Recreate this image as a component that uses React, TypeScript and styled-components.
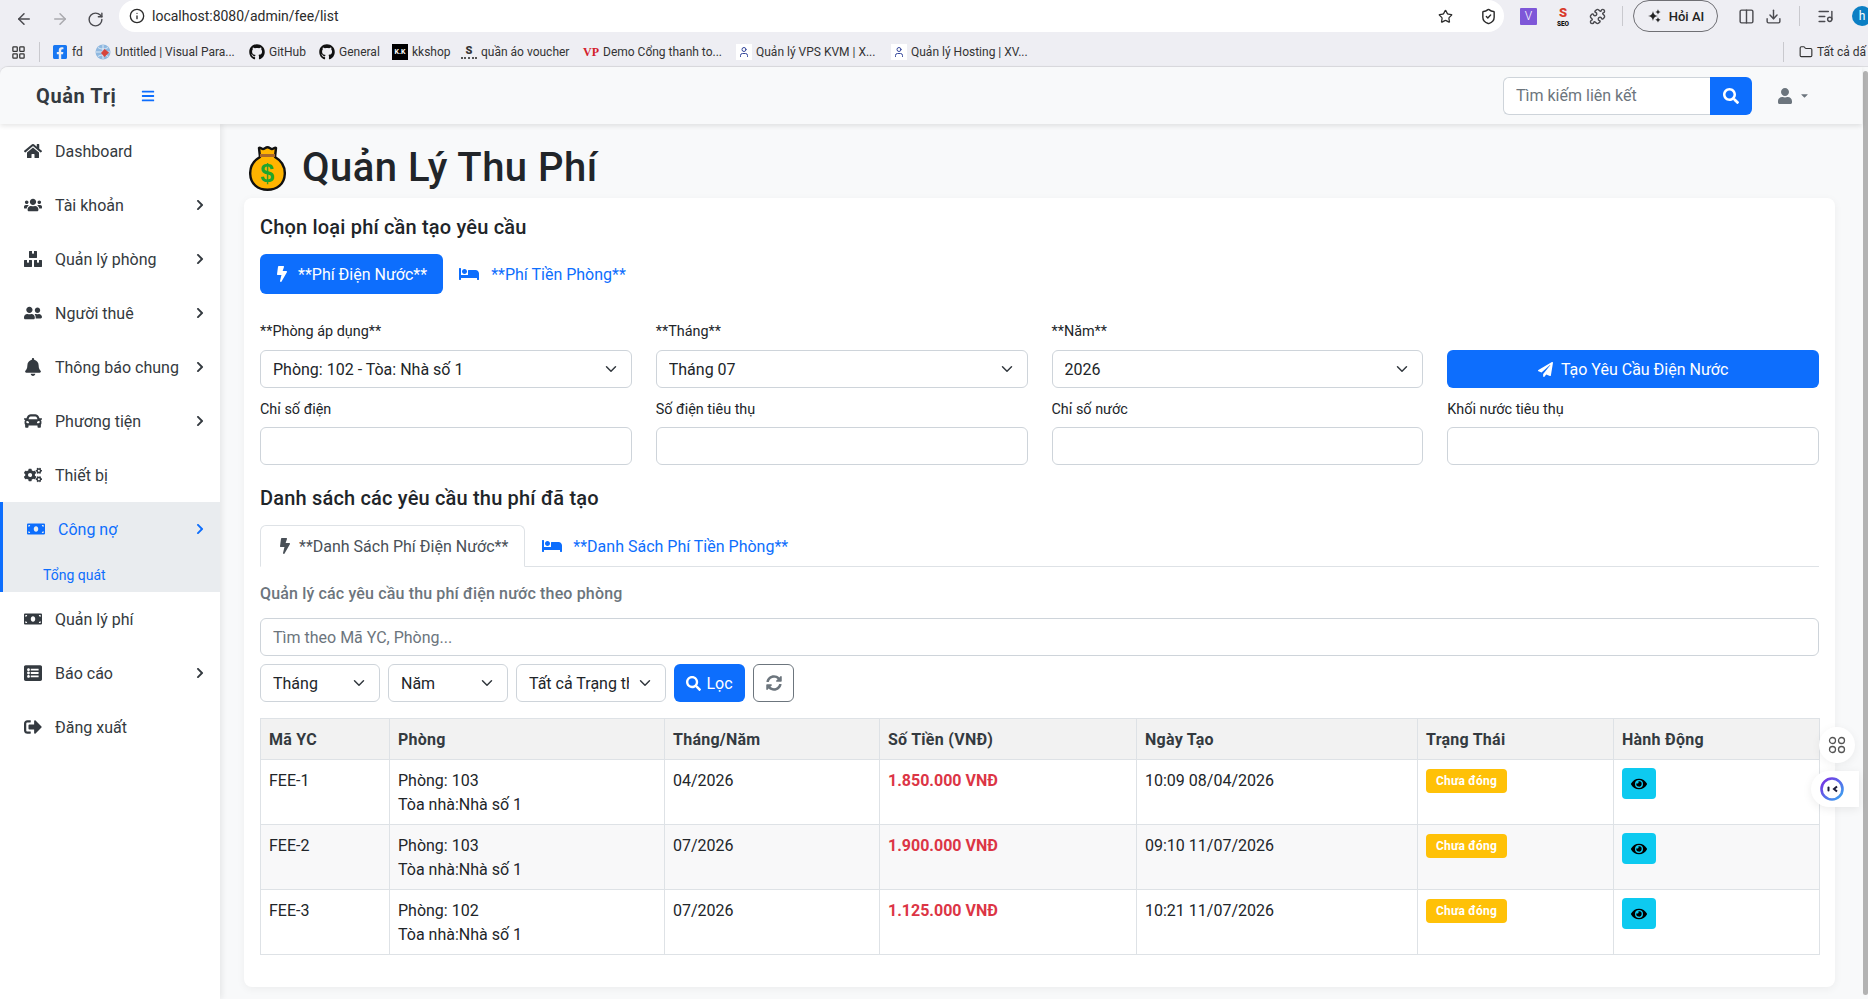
import React from 'react';
import styled, {createGlobalStyle} from 'styled-components';
import {
    FaBars, FaBed, FaBell, FaBolt, FaBoxes, FaCar, FaCaretDown, FaChevronRight, FaCogs, FaEye, FaFacebookSquare,
    FaGithub, FaHome, FaListAlt, FaMoneyBill, FaPaperPlane, FaSearch, FaSignOutAlt, FaSyncAlt, FaUser,
    FaUserFriends, FaUsers,
} from 'react-icons/fa';
import {
    ArrowLeft, ArrowRight, Columns2, Download, Folder, Info, LayoutGrid, ListMusic, Puzzle, RotateCw,
    ShieldCheck, Star, User,
} from 'lucide-react';

const font = `Roboto, "Noto Sans", sans-serif`;
const chevron = `url("data:image/svg+xml,%3csvg xmlns='http://www.w3.org/2000/svg' viewBox='0 0 16 16'%3e%3cpath fill='none' stroke='%23343a40' stroke-linecap='round' stroke-linejoin='round' stroke-width='2' d='m2 5 6 6 6-6'/%3e%3c/svg%3e")`;

const GlobalStyle = createGlobalStyle`
  html, body {
    margin: 0;
    height: 100%;
    overflow: hidden;
    background: #f8f9fa;
    font-family: ${font};
    font-size: 16px;
    color: #212529;
  }
  * {
    box-sizing: border-box;
  }
`;

const Window = styled.div`
  width: 1868px;
  height: 999px;
  display: flex;
  flex-direction: column;
  overflow: hidden;
  background: #eeeef3;
`;

const Toolbar = styled.div`
  height: 38px;
  display: flex;
  align-items: center;
  color: #4a4a4f;
`;

const NavIcons = styled.div`
  width: 119px;
  flex: none;
  display: flex;
  align-items: center;
  gap: 18px;
  padding-left: 15px;
  svg:nth-child(2) {
    color: #a9a9ae;
  }
`;

const AddressBar = styled.div`
  width: 1385px;
  height: 32px;
  margin-top: -6px;
  flex: none;
  border-radius: 16px;
  background: #fff;
  display: flex;
  align-items: center;
  padding: 0 7px 0 10px;
  font-size: 14px;
  color: #2b2b2b;
  gap: 7px;
`;

const Url = styled.span`
  flex: 1;
`;

const ExtIcons = styled.div`
  flex: 1;
  display: flex;
  align-items: center;
  margin-top: -6px;
  padding-left: 16px;
  overflow: hidden;
  height: 32px;
  svg {
    flex: none;
  }
`;

const VIcon = styled.span`
  width: 17px;
  height: 17px;
  flex: none;
  border-radius: 1px;
  background: #7e57d8;
  color: #fff;
  font-size: 12px;
  font-weight: 300;
  display: flex;
  align-items: center;
  justify-content: center;
  margin-right: 18px;
`;

const SeoIcon = styled.span`
  width: 16px;
  flex: none;
  display: flex;
  flex-direction: column;
  align-items: center;
  margin-right: 18px;
`;

const SeoLetter = styled.span`
  color: #d93a2b;
  font-size: 13px;
  line-height: 15px;
  font-weight: 900;
`;

const SeoWord = styled.span`
  color: #111;
  font-size: 6.5px;
  line-height: 8px;
  font-weight: 900;
`;

const Divider = styled.span`
  width: 1px;
  height: 20px;
  flex: none;
  background: #c9c9ce;
  margin: 0 ${p => p.$right ?? 0}px 0 ${p => p.$left ?? 0}px;
`;

const AskAi = styled.div`
  width: 85px;
  height: 32px;
  flex: none;
  border: 1px solid #6f6f74;
  border-radius: 16px;
  display: flex;
  align-items: center;
  justify-content: center;
  gap: 6px;
  font-size: 13px;
  font-weight: 500;
  color: #222;
  margin-right: 20px;
`;

const Avatar = styled.span`
  width: 20px;
  height: 20px;
  flex: none;
  border-radius: 50%;
  background: #0b7fc4;
  color: #fff;
  font-size: 12px;
  display: flex;
  align-items: center;
  justify-content: center;
  margin-left: 18px;
`;

const BookmarkBar = styled.div`
  height: 28px;
  display: flex;
  align-items: center;
  font-size: 12px;
  color: #333;
  white-space: nowrap;
  overflow: hidden;
  padding-left: 11px;
  svg {
    flex: none;
  }
`;

const AppsIcon = styled(LayoutGrid)`
  margin-right: 13px;
`;

const Bookmark = styled.span`
  display: flex;
  align-items: center;
  gap: 4px;
  width: ${p => p.$w}px;
  flex: none;
`;

const KkIcon = styled.span`
  width: 16px;
  height: 16px;
  background: #000;
  color: #fff;
  font-size: 7px;
  font-weight: 700;
  display: flex;
  align-items: center;
  justify-content: center;
`;

const ShopIcon = styled.span`
  width: 16px;
  flex: none;
  color: #333;
  font-size: 11px;
  line-height: 12px;
  font-weight: 900;
  text-align: center;
  border-bottom: 2px dotted #555;
`;

const VpIcon = styled.span`
  width: 16px;
  color: #d3202a;
  font-size: 12px;
  font-weight: 900;
  font-family: "Liberation Serif", serif;
`;

const UserFav = styled.span`
  width: 16px;
  height: 16px;
  background: #fff;
  color: #33459a;
  display: flex;
  align-items: center;
  justify-content: center;
`;

const Screen = styled.div`
  flex: 1;
  min-height: 0;
  display: flex;
  background: #f8f9fa;
  border-top: 1px solid #dcdce0;
  border-top-left-radius: 8px;
`;

const AppArea = styled.div`
  flex: 1;
  min-width: 0;
  display: flex;
  flex-direction: column;
  position: relative;
`;

const ScrollTrack = styled.div`
  width: 6px;
  flex: none;
  padding: 4px 0 4px 1px;
`;

const ScrollThumb = styled.div`
  height: 100%;
  background: #b3b3b3;
  border-radius: 3px;
`;

const Navbar = styled.header`
  height: 57px;
  flex: none;
  display: flex;
  align-items: center;
  padding: 0 52px 0 36px;
  background: #f8f9fa;
  border-top-left-radius: 8px;
  box-shadow: 0 2px 5px rgba(0, 0, 0, .1);
  position: relative;
  z-index: 2;
`;

const Brand = styled.div`
  font-size: 20px;
  font-weight: 700;
  letter-spacing: .6px;
  color: #343a40;
  width: 105px;
`;

const Burger = styled.span`
  color: #0d6efd;
  display: flex;
`;

const NavSearch = styled.div`
  margin-left: auto;
  width: 249px;
  height: 38px;
  display: flex;
`;

const NavInput = styled.input`
  flex: 1;
  min-width: 0;
  height: 38px;
  border: 1px solid #ced4da;
  border-right: 0;
  border-radius: 6px 0 0 6px;
  padding: 0 12px;
  font: 16px ${font};
  background: #fff;
  &::placeholder {
    color: #6c757d;
    opacity: 1;
  }
`;

const NavSearchButton = styled.button`
  width: 42px;
  border: 0;
  border-radius: 0 6px 6px 0;
  background: #0d6efd;
  color: #fff;
  display: flex;
  align-items: center;
  justify-content: center;
`;

const UserMenu = styled.div`
  display: flex;
  align-items: center;
  gap: 6px;
  margin-left: 25px;
  color: #6c757d;
`;

const Body = styled.div`
  flex: 1;
  min-height: 0;
  display: flex;
`;

const Sidebar = styled.nav`
  width: 220px;
  flex: none;
  background: #fff;
  box-shadow: 2px 0 6px rgba(0, 0, 0, .08);
  position: relative;
  z-index: 1;
`;

const NavGroup = styled.div`
  background: ${p => (p.$active ? '#e9ecef' : 'transparent')};
  border-left: ${p => (p.$active ? '3px solid #0d6efd' : '0')};
`;

const NavItem = styled.a`
  height: 54px;
  display: flex;
  align-items: center;
  padding: 0 14px 0 23px;
  color: ${p => (p.$active ? '#0d6efd' : '#343a40')};
  font-size: 16px;
`;

const NavIcon = styled.span`
  width: 20px;
  flex: none;
  display: flex;
  justify-content: center;
  margin-right: 12px;
  font-size: 18px;
`;

const NavArrow = styled.span`
  margin-left: auto;
  display: flex;
  font-size: 12px;
`;

const SubItem = styled.a`
  height: 36px;
  display: flex;
  align-items: center;
  padding: 2px 0 0 40px;
  color: #0d6efd;
  font-size: 14px;
`;

const Main = styled.main`
  flex: 1;
  min-width: 0;
  padding: 20px 27px 0 24px;
`;

const Title = styled.h1`
  margin: 0 0 6px;
  height: 48px;
  display: flex;
  align-items: center;
  gap: 16px;
  padding-left: 5px;
  font-size: 40px;
  line-height: 1.2;
  font-weight: 500;
  letter-spacing: .5px;
`;

const Card = styled.section`
  height: 789px;
  background: #fff;
  border-radius: 8px;
  padding: 17px 16px 16px;
  box-shadow: 0 2px 8px rgba(0, 0, 0, .05);
`;

const SectionTitle = styled.h5`
  margin: 0 0 ${p => p.$mb}px;
  font-size: 20px;
  line-height: 24px;
  font-weight: 500;
  letter-spacing: .18px;
`;

const PillRow = styled.div`
  display: flex;
  margin-bottom: 26px;
`;

const Pill = styled.button`
  height: 40px;
  display: flex;
  align-items: center;
  gap: ${p => (p.$active ? 8 : 12)}px;
  border: 0;
  padding: 0 16px 0 ${p => (p.$active ? 14 : 16)}px;
  border-radius: 6px;
  font: 16px ${font};
  background: ${p => (p.$active ? '#0d6efd' : 'transparent')};
  color: ${p => (p.$active ? '#fff' : '#0d6efd')};
`;

const FormGrid = styled.div`
  display: grid;
  grid-template-columns: repeat(4, 1fr);
  column-gap: 24px;
  row-gap: 10px;
  align-items: end;
  margin-bottom: 21px;
`;

const Field = styled.div`
  display: flex;
  flex-direction: column;
`;

const Label = styled.label`
  font-size: 14.4px;
  line-height: 24px;
  margin-bottom: ${p => p.$mb ?? 6}px;
  color: #212529;
`;

const Select = styled.select`
  height: 38px;
  width: ${p => (p.$w ? `${p.$w}px` : '100%')};
  flex: none;
  appearance: none;
  border: 1px solid #ced4da;
  border-radius: 6px;
  padding: 0 36px 0 12px;
  font: 16px ${font};
  color: #212529;
  background: #fff ${chevron} no-repeat right 12px center / 16px 12px;
`;

const Input = styled.input`
  height: 38px;
  width: 100%;
  border: 1px solid #ced4da;
  border-radius: 6px;
  padding: 0 12px;
  font: 16px ${font};
  background: #fff;
  &::placeholder {
    color: #6c757d;
    opacity: 1;
  }
`;

const PrimaryButton = styled.button`
  height: 38px;
  display: flex;
  align-items: center;
  justify-content: center;
  gap: 8px;
  border: 0;
  border-radius: 6px;
  background: #0d6efd;
  color: #fff;
  font: 16px ${font};
  padding: 0 12px;
`;

const Tabs = styled.div`
  height: 42px;
  display: flex;
  border-bottom: 1px solid #dee2e6;
  margin-bottom: 15px;
`;

const Tab = styled.div`
  height: 42px;
  display: flex;
  align-items: center;
  gap: ${p => (p.$active ? 6 : 11)}px;
  padding: 0 16px;
  border: 1px solid ${p => (p.$active ? '#dee2e6' : 'transparent')};
  border-bottom-color: ${p => (p.$active ? '#fff' : 'transparent')};
  border-radius: 6px 6px 0 0;
  background: ${p => (p.$active ? '#fff' : 'transparent')};
  color: ${p => (p.$active ? '#495057' : '#0d6efd')};
`;

const Muted = styled.h6`
  margin: 0 0 12px;
  font-size: 16px;
  line-height: 24px;
  font-weight: 500;
  letter-spacing: .15px;
  color: #6c757d;
`;

const FilterRow = styled.div`
  display: flex;
  gap: 8px;
  margin: 8px 0 16px;
`;

const FilterButton = styled(PrimaryButton)`
  width: 71px;
  gap: 5px;
`;

const RefreshButton = styled.button`
  width: 41px;
  height: 38px;
  border: 1px solid #6c757d;
  border-radius: 6px;
  background: #fff;
  color: #6c757d;
  display: flex;
  align-items: center;
  justify-content: center;
`;

const Table = styled.table`
  width: 1559px;
  table-layout: fixed;
  border-collapse: collapse;
`;

const HeadCell = styled.th`
  height: 41px;
  padding: 8px;
  text-align: left;
  font-weight: 700;
  font-size: 16px;
  letter-spacing: .25px;
  background: #f2f2f2;
  color: #343a40;
  border: 1px solid #dee2e6;
`;

const Row = styled.tr`
  background: ${p => (p.$striped ? '#f8f8f9' : '#fff')};
`;

const Cell = styled.td`
  height: 65px;
  padding: 9px 8px 7px;
  vertical-align: top;
  line-height: 24px;
  font-size: 16px;
  border: 1px solid #dee2e6;
`;

const ActionCell = styled(Cell)`
  padding: 8px;
`;

const Amount = styled.span`
  color: #dc3545;
  font-weight: 700;
`;

const Badge = styled.span`
  display: inline-block;
  margin-top: 1px;
  padding: 0 10px;
  height: 24px;
  line-height: 24px;
  border-radius: 4px;
  background: #ffc107;
  color: #fff;
  font-size: 12px;
  font-weight: 700;
  letter-spacing: .2px;
`;

const EyeButton = styled.button`
  width: 34px;
  height: 31px;
  border: 0;
  border-radius: 4px;
  background: #0dcaf0;
  color: #000;
  display: flex;
  align-items: center;
  justify-content: center;
`;

const FloatCircle = styled.div`
  position: absolute;
  top: 660px;
  right: 7px;
  width: 36px;
  height: 36px;
  border-radius: 50%;
  background: #fff;
  box-shadow: 0 2px 10px rgba(0, 0, 0, .06);
  display: flex;
  align-items: center;
  justify-content: center;
  color: #555;
  z-index: 3;
`;

const FloatPill = styled.div`
  position: absolute;
  top: 704px;
  right: 3px;
  width: 48px;
  height: 36px;
  border-radius: 18px 0 0 18px;
  background: #fff;
  box-shadow: 0 2px 10px rgba(0, 0, 0, .08);
  display: flex;
  align-items: center;
  padding-left: 9px;
  z-index: 3;
`;

const MoneyBag = () => (
    <svg width="37" height="45" viewBox="0 0 37 45">
        <path d="M10 2 C11 0.8 12.5 3 14 3 C15.5 3 16.5 1.2 18.5 1.2 C20.5 1.2 21.5 3 23 3 C24.5 3 26 0.8 27 2 L26 11 C33 15 36 21 35.8 28 C35.5 38 28 43.8 18.5 43.8 C9 43.8 1.5 38 1.2 28 C1 21 4 15 11 11 Z"
              fill="#ffb400" stroke="#111" strokeWidth="2.4" strokeLinejoin="round"/>
        <rect x="11" y="8" width="15" height="3" fill="#a8682c"/>
        <text x="18.5" y="36" textAnchor="middle" fontSize="25" fontWeight="700" fill="#1ea52e"
              fontFamily="Liberation Sans, sans-serif">$</text>
    </svg>
);

const BotFace = () => (
    <svg width="24" height="24" viewBox="0 0 24 24">
        <defs>
            <linearGradient id="ring" x1="0" y1="0" x2="1" y2="1">
                <stop offset="0" stopColor="#7a2be2"/>
                <stop offset="1" stopColor="#38a8f0"/>
            </linearGradient>
        </defs>
        <circle cx="12" cy="12" r="10.5" fill="#fff" stroke="url(#ring)" strokeWidth="2.6"/>
        <rect x="7.5" y="9.5" width="2" height="5" rx="1" fill="#1c1c3a"/>
        <path d="M17 9.5 L14 12 L17 14.5" fill="none" stroke="#1c1c3a" strokeWidth="2"/>
    </svg>
);

const CommandIcon = () => (
    <svg width="18" height="18" viewBox="0 0 18 18" fill="none" stroke="currentColor" strokeWidth="1.3">
        <rect x="1.5" y="1.5" width="6" height="6" rx="3"/>
        <rect x="10.5" y="1.5" width="6" height="6" rx="3"/>
        <rect x="1.5" y="10.5" width="6" height="6" rx="3"/>
        <rect x="10.5" y="10.5" width="6" height="6" rx="3"/>
    </svg>
);

const AiSparkle = () => (
    <svg width="16" height="16" viewBox="0 0 16 16" fill="#222">
        <path d="M6 3 C6.6 6.2 7.6 7.4 11 8 C7.6 8.6 6.6 9.8 6 13 C5.4 9.8 4.4 8.6 1 8 C4.4 7.4 5.4 6.2 6 3 Z"/>
        <path d="M12.5 1 L13.6 3.4 L16 4.5 L13.6 5.6 L12.5 8 L11.4 5.6 L9 4.5 L11.4 3.4 Z" transform="translate(1.6 .6) scale(.75)"/>
        <path d="M12.5 8 L13.6 10.4 L16 11.5 L13.6 12.6 L12.5 15 L11.4 12.6 L9 11.5 L11.4 10.4 Z" transform="translate(1.6 3.2) scale(.75)"/>
    </svg>
);

const GlobeFav = () => (
    <svg width="16" height="16" viewBox="0 0 16 16">
        <circle cx="8" cy="8" r="7.5" fill="#8fb8e0"/>
        <path d="M1 8h14M8 1v14M3 3.5c3 2 7 2 10 0M3 12.5c3-2 7-2 10 0" stroke="#fff" strokeWidth=".7" fill="none"/>
        <path d="M9.5 5 L14 8.5 L9.5 13 L6 9 Z" fill="#d6453d"/>
    </svg>
);

const menu = [
    {icon: <FaHome/>, label: 'Dashboard'},
    {icon: <FaUsers/>, label: 'Tài khoản', arrow: true},
    {icon: <FaBoxes/>, label: 'Quản lý phòng', arrow: true},
    {icon: <FaUserFriends/>, label: 'Người thuê', arrow: true},
    {icon: <FaBell/>, label: 'Thông báo chung', arrow: true},
    {icon: <FaCar/>, label: 'Phương tiện', arrow: true},
    {icon: <FaCogs/>, label: 'Thiết bị'},
    {icon: <FaMoneyBill/>, label: 'Công nợ', arrow: true, active: true, sub: 'Tổng quát'},
    {icon: <FaMoneyBill/>, label: 'Quản lý phí'},
    {icon: <FaListAlt/>, label: 'Báo cáo', arrow: true},
    {icon: <FaSignOutAlt/>, label: 'Đăng xuất'},
];

const fees = [
    {id: 'FEE-1', room: '103', period: '04/2026', amount: '1.850.000 VNĐ', created: '10:09 08/04/2026'},
    {id: 'FEE-2', room: '103', period: '07/2026', amount: '1.900.000 VNĐ', created: '09:10 11/07/2026'},
    {id: 'FEE-3', room: '102', period: '07/2026', amount: '1.125.000 VNĐ', created: '10:21 11/07/2026'},
];

const columns: [string, number][] = [
    ['Mã YC', 129], ['Phòng', 275], ['Tháng/Năm', 215], ['Số Tiền (VNĐ)', 257],
    ['Ngày Tạo', 281], ['Trạng Thái', 196], ['Hành Động', 206],
];

const BrowserChrome = () => (
    <>
        <Toolbar>
            <NavIcons>
                <ArrowLeft size={18}/>
                <ArrowRight size={18}/>
                <RotateCw size={17}/>
            </NavIcons>
            <AddressBar>
                <Info size={16}/>
                <Url>localhost:8080/admin/fee/list</Url>
                <Star size={15} style={{marginRight: 20}}/>
                <ShieldCheck size={17}/>
            </AddressBar>
            <ExtIcons>
                <VIcon>V</VIcon>
                <SeoIcon><SeoLetter>S</SeoLetter><SeoWord>SEO</SeoWord></SeoIcon>
                <Puzzle size={17}/>
                <Divider $left={16} $right={10}/>
                <AskAi><AiSparkle/>Hỏi AI</AskAi>
                <Columns2 size={17}/>
                <Download size={17} style={{marginLeft: 10}}/>
                <Divider $left={17} $right={17}/>
                <ListMusic size={17}/>
                <Avatar>h</Avatar>
            </ExtIcons>
        </Toolbar>
        <BookmarkBar>
            <AppsIcon size={15}/>
            <Divider $right={12}/>
            <Bookmark $w={43}><FaFacebookSquare size={16} color="#1877f2"/>fd</Bookmark>
            <Bookmark $w={154}><GlobeFav/>Untitled | Visual Para...</Bookmark>
            <Bookmark $w={70}><FaGithub size={16} color="#111"/>GitHub</Bookmark>
            <Bookmark $w={73}><FaGithub size={16} color="#111"/>General</Bookmark>
            <Bookmark $w={69}><KkIcon>K.K</KkIcon>kkshop</Bookmark>
            <Bookmark $w={122}><ShopIcon>S</ShopIcon>quần áo voucher</Bookmark>
            <Bookmark $w={153}><VpIcon>VP</VpIcon>Demo Cổng thanh to...</Bookmark>
            <Bookmark $w={155}><UserFav><User size={12}/></UserFav>Quản lý VPS KVM | X...</Bookmark>
            <Bookmark $w={140}><UserFav><User size={12}/></UserFav>Quản lý Hosting | XV...</Bookmark>
            <Divider $left={752} $right={15}/>
            <Bookmark $w={66}><Folder size={14}/>Tất cả dấ</Bookmark>
        </BookmarkBar>
    </>
);

const SideMenu = () => (
    <Sidebar>
        {menu.map(item => (
            <NavGroup key={item.label} $active={item.active}>
                <NavItem $active={item.active}>
                    <NavIcon>{item.icon}</NavIcon>
                    {item.label}
                    {item.arrow && <NavArrow><FaChevronRight/></NavArrow>}
                </NavItem>
                {item.sub && <SubItem>{item.sub}</SubItem>}
            </NavGroup>
        ))}
    </Sidebar>
);

const CreateForm = () => (
    <FormGrid>
        <Field>
            <Label>**Phòng áp dụng**</Label>
            <Select><option>Phòng: 102 - Tòa: Nhà số 1</option></Select>
        </Field>
        <Field>
            <Label>**Tháng**</Label>
            <Select><option>Tháng 07</option></Select>
        </Field>
        <Field>
            <Label>**Năm**</Label>
            <Select><option>2026</option></Select>
        </Field>
        <PrimaryButton><FaPaperPlane size={15}/>Tạo Yêu Cầu Điện Nước</PrimaryButton>
        {['Chỉ số điện', 'Số điện tiêu thụ', 'Chỉ số nước', 'Khối nước tiêu thụ'].map(label => (
            <Field key={label}>
                <Label $mb={5}>{label}</Label>
                <Input/>
            </Field>
        ))}
    </FormGrid>
);

const FeeTable = () => (
    <Table>
        <colgroup>
            {columns.map(([name, width]) => <col key={name} width={width}/>)}
        </colgroup>
        <thead>
        <tr>
            {columns.map(([name]) => <HeadCell key={name}>{name}</HeadCell>)}
        </tr>
        </thead>
        <tbody>
        {fees.map((fee, i) => (
            <Row key={fee.id} $striped={i === 1}>
                <Cell>{fee.id}</Cell>
                <Cell>Phòng: {fee.room}<br/>Tòa nhà:Nhà số 1</Cell>
                <Cell>{fee.period}</Cell>
                <Cell><Amount>{fee.amount}</Amount></Cell>
                <Cell>{fee.created}</Cell>
                <ActionCell><Badge>Chưa đóng</Badge></ActionCell>
                <ActionCell><EyeButton><FaEye size={16}/></EyeButton></ActionCell>
            </Row>
        ))}
        </tbody>
    </Table>
);

export default function App() {
    return (
        <Window>
            <GlobalStyle/>
            <BrowserChrome/>
            <Screen>
                <AppArea>
                    <Navbar>
                        <Brand>Quản Trị</Brand>
                        <Burger><FaBars size={14}/></Burger>
                        <NavSearch>
                            <NavInput placeholder="Tìm kiếm liên kết"/>
                            <NavSearchButton><FaSearch size={16}/></NavSearchButton>
                        </NavSearch>
                        <UserMenu><FaUser size={16}/><FaCaretDown size={11}/></UserMenu>
                    </Navbar>
                    <Body>
                        <SideMenu/>
                        <Main>
                            <Title><MoneyBag/>Quản Lý Thu Phí</Title>
                            <Card>
                                <SectionTitle $mb={15}>Chọn loại phí cần tạo yêu cầu</SectionTitle>
                                <PillRow>
                                    <Pill $active><FaBolt/>**Phí Điện Nước**</Pill>
                                    <Pill><FaBed size={20}/>**Phí Tiền Phòng**</Pill>
                                </PillRow>
                                <CreateForm/>
                                <SectionTitle $mb={15}>Danh sách các yêu cầu thu phí đã tạo</SectionTitle>
                                <Tabs>
                                    <Tab $active><FaBolt/>**Danh Sách Phí Điện Nước**</Tab>
                                    <Tab><FaBed size={20}/>**Danh Sách Phí Tiền Phòng**</Tab>
                                </Tabs>
                                <Muted>Quản lý các yêu cầu thu phí điện nước theo phòng</Muted>
                                <Input placeholder="Tìm theo Mã YC, Phòng..."/>
                                <FilterRow>
                                    <Select $w={120}><option>Tháng</option></Select>
                                    <Select $w={120}><option>Năm</option></Select>
                                    <Select $w={150}><option>Tất cả Trạng thái</option></Select>
                                    <FilterButton><FaSearch size={15}/>Lọc</FilterButton>
                                    <RefreshButton><FaSyncAlt size={16}/></RefreshButton>
                                </FilterRow>
                                <FeeTable/>
                            </Card>
                        </Main>
                    </Body>
                    <FloatCircle><CommandIcon/></FloatCircle>
                    <FloatPill><BotFace/></FloatPill>
                </AppArea>
                <ScrollTrack><ScrollThumb/></ScrollTrack>
            </Screen>
        </Window>
    );
}
